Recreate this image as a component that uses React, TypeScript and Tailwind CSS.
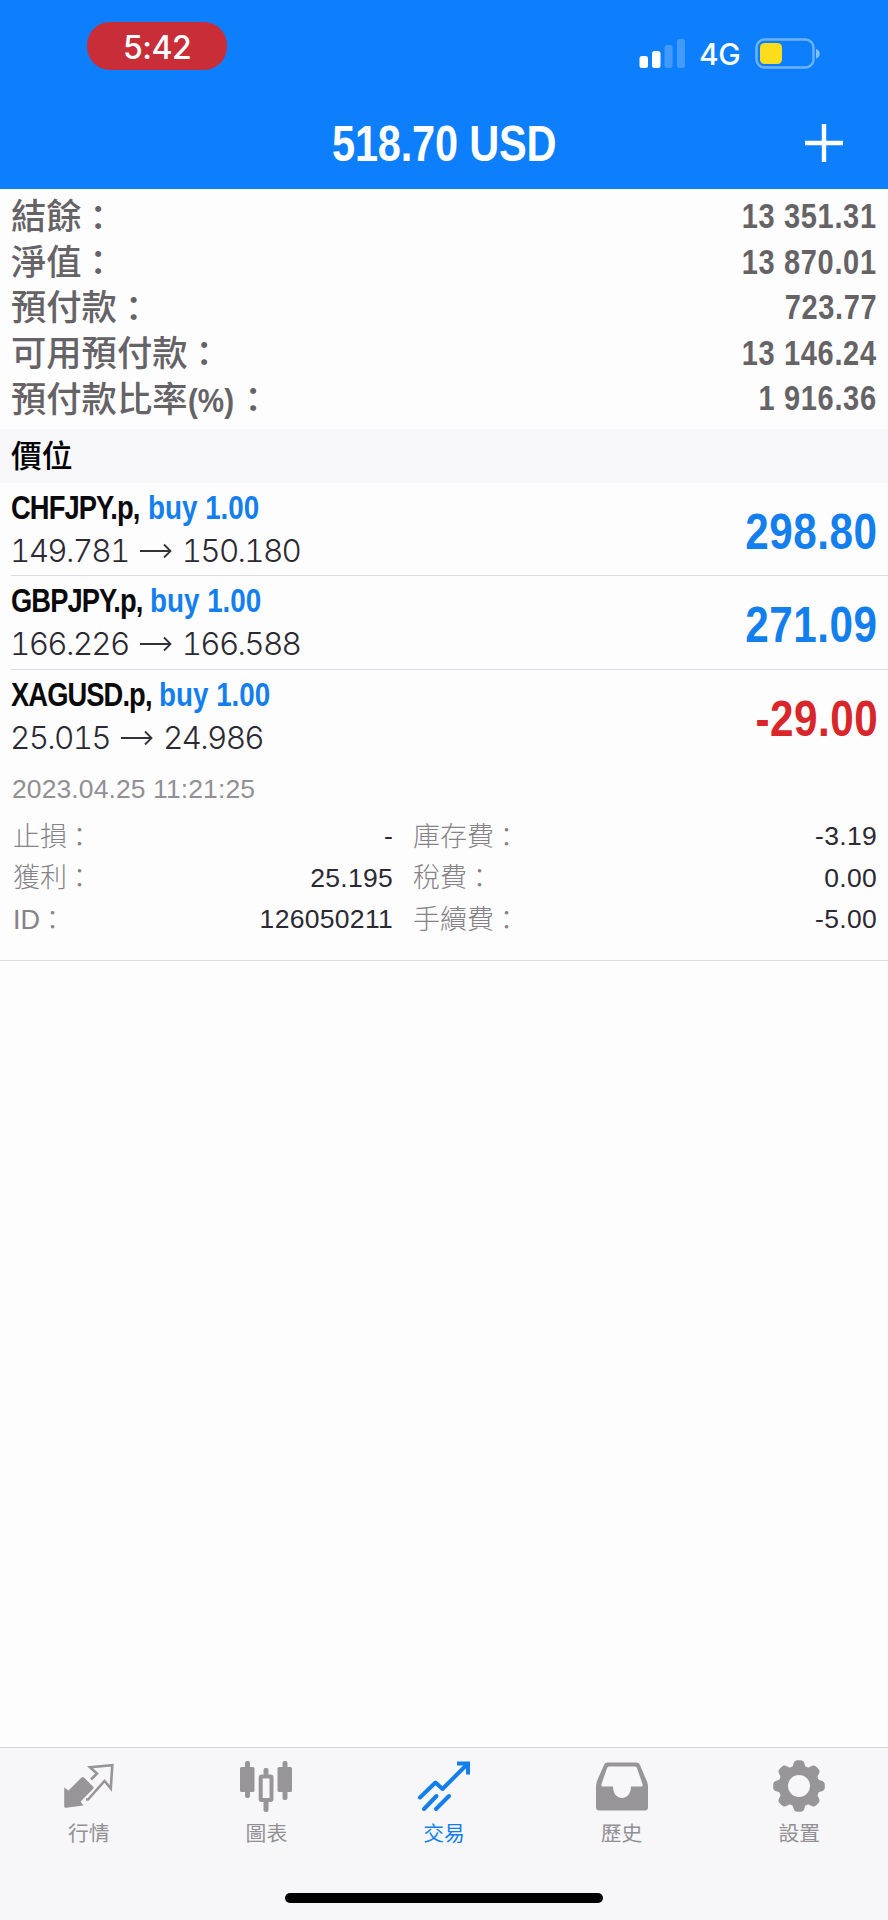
import React from "react";

const CJK = "font-['Liberation_Sans','Noto_Sans_CJK_TC',sans-serif]";
const CONDENSED = "inline-block whitespace-nowrap font-['Liberation_Sans',sans-serif] font-bold";
const LIGHT = "font-['Inter','Liberation_Sans',sans-serif] font-light";

const summary = [
  ["結餘", "", "13 351.31"],
  ["淨值", "", "13 870.01"],
  ["預付款", "", "723.77"],
  ["可用預付款", "", "13 146.24"],
  ["預付款比率", "(%)", "1 916.36"],
];

const positions = [
  { symbol: "CHFJPY.p,", width: "w-[137px]", open: "149.781", now: "150.180", profit: "298.80", loss: false },
  { symbol: "GBPJPY.p,", width: "w-[139px]", open: "166.226", now: "166.588", profit: "271.09", loss: false },
  { symbol: "XAGUSD.p,", width: "w-[148px]", open: "25.015", now: "24.986", profit: "-29.00", loss: true },
];

const details = [
  ["止損", "-", "庫存費", "-3.19"],
  ["獲利", "25.195", "稅費", "0.00"],
  ["ID", "126050211", "手續費", "-5.00"],
];

function StatusBar() {
  return (
    <div className="flex h-[98px] items-start pl-[87px] pr-[66px] text-white">
      <div className="mt-[22px] flex h-[48px] w-[140px] items-center justify-center rounded-[23px] bg-[#c92e38] pt-[3px] font-['Inter',sans-serif] text-[32px] font-medium leading-none tracking-[-0.5px]">
        5:42
      </div>
      <div className="mt-[37px] ml-auto flex items-center">
        <svg width="47" height="31" viewBox="0 0 47 31" fill="#fff">
          <rect x="0.5" y="18" width="8.5" height="12" rx="2.5" />
          <rect x="13" y="13" width="8.5" height="17" rx="2.5" />
          <rect x="25.500" y="7" width="8" height="23" rx="2.5" opacity="0.22" />
          <rect x="38" y="1" width="8" height="29" rx="2.5" opacity="0.22" />
        </svg>
        <span className="ml-[13px] w-[43px] pt-[2px] font-['Inter',sans-serif] text-[30px] font-medium leading-[31px] tracking-[-0.5px]">
          4G
        </span>
        <svg className="ml-[13px]" width="67" height="31" viewBox="0 0 67 31">
          <rect x="1.500" y="1.500" width="57" height="28" rx="8" fill="none" stroke="#fff" strokeOpacity="0.4" strokeWidth="2.4" />
          <rect x="5" y="5" width="22" height="21" rx="4.500" fill="#fcdd1b" />
          <path d="M61 11c5 1.500 5 8 0 9.500z" fill="#fff" fillOpacity="0.5" />
        </svg>
      </div>
    </div>
  );
}

function Arrow() {
  return (
    <svg className="mr-[10px] ml-[11px]" width="32" height="16" viewBox="0 0 32 16" fill="none" stroke="#33313a" strokeWidth="1.8">
      <path d="M0 8h30M24 1.500l6.500 6.500-6.500 6.500" />
    </svg>
  );
}

function QuotesIcon() {
  return (
    <svg width="52" height="52" viewBox="0 0 52 52">
      <path d="M1.200 27.500l4.300 3L18.500 17.500q1.200-1.200 2.500 0l9 9q1.200 1.200 0 2.400L17.500 41.500l3 4L3 47.800q-1.800 0-1.800-1.600z" fill="#97959a" />
      <path d="M28 19.500l6-6-7-6.200L49.300 5.200 47.800 28.500 41.500 21 25 39.500h-2" fill="none" stroke="#97959a" strokeWidth="2.6" />
    </svg>
  );
}

function ChartIcon() {
  return (
    <svg width="52" height="52" viewBox="0 0 52 52" fill="#97959a">
      <rect x="5" y="1" width="5" height="37" rx="2" />
      <rect x="0" y="7" width="14.500" height="25" rx="1.500" />
      <rect x="42.500" y="1" width="5" height="39" rx="2" />
      <rect x="37.500" y="7" width="14.500" height="25" rx="1.500" />
      <rect x="23.500" y="8" width="5" height="8" rx="2" />
      <rect x="23.500" y="39" width="5" height="13" rx="2" />
      <rect x="20.700" y="16.500" width="10.800" height="23.500" rx="1" fill="none" stroke="#97959a" strokeWidth="4" />
    </svg>
  );
}

function TradeIcon() {
  return (
    <svg width="52" height="52" viewBox="0 0 52 52" fill="none" stroke="#137fee" strokeWidth="4" strokeLinecap="round" strokeLinejoin="round">
      <path d="M2 37.500L17.500 22.500l7 6.500L49 4.500" />
      <path d="M39 3.500h11v11" strokeLinecap="butt" strokeLinejoin="miter" />
      <path d="M6 49l12.500-13M18 49l13-13" />
    </svg>
  );
}

function HistoryIcon() {
  return (
    <svg width="52" height="52" viewBox="0 0 52 52">
      <path
        fillRule="evenodd"
        fill="#97959a"
        d="M12 2.500h28c2 0 3.200.8 4 2.500l5 12c1.700 3.500 3 6 3 10v20.500c0 2-1.200 3-3 3H3c-1.800 0-3-1-3-3V27c0-4 1.200-6.500 2.700-10L8 5c.8-1.700 2-2.500 4-2.500zM13.500 6.500c-1.200 0-2 .5-2.500 1.700L5.500 24c-.4 1.400 0 2.500 1.500 2.500h10C17 33 20.500 38 26 38s9-5 9-11.500h10c1.500 0 1.900-1.100 1.500-2.500L41 8.200c-.5-1.200-1.300-1.700-2.500-1.700z"
      />
    </svg>
  );
}

function SettingsIcon() {
  return (
    <svg width="52" height="52" viewBox="0 0 52 52">
      <g fill="#97959a">
        {[0, 45, 90, 135, 180, 225, 270, 315].map((a) => (
          <path key={a} transform={`rotate(${a} 26 26)`} d="M16.500 9c2.700-.5 3.300-2.500 3.900-5C21.100 1.300 22.300.2 24.500.2h3c2.200 0 3.400 1.100 4.100 3.800.6 2.500 1.200 4.500 3.900 5z" />
        ))}
      </g>
      <circle cx="26" cy="26" r="15.800" fill="none" stroke="#97959a" strokeWidth="9.600" />
    </svg>
  );
}

const tabs = [
  { label: "行情", icon: <QuotesIcon />, active: false },
  { label: "圖表", icon: <ChartIcon />, active: false },
  { label: "交易", icon: <TradeIcon />, active: true },
  { label: "歷史", icon: <HistoryIcon />, active: false },
  { label: "設置", icon: <SettingsIcon />, active: false },
];

function DetailCell({ label, value }: { label: string; value: string }) {
  return (
    <>
      <span className="flex pt-[2px] font-light text-[#858388]">
        {label}
        <span className="-ml-[1px] pt-[1px]">：</span>
      </span>
      <span className="text-[26.500px] tracking-[0.3px] text-[#2b2933]">{value}</span>
    </>
  );
}

export default function App() {
  return (
    <div className={`flex h-[1920px] w-[888px] flex-col overflow-hidden bg-[#fefdfe] ${CJK}`}>
      <header className="h-[189px] shrink-0 bg-[#0d7ffc]">
        <StatusBar />
        <div className="grid h-[91px] grid-cols-[1fr_auto_1fr] items-center text-white">
          <span />
          <h1 className={`${CONDENSED} scale-x-[0.83] text-[50px] leading-none tracking-[-0.2px]`}>518.70 USD</h1>
          <svg className="mr-[45px] mb-[2px] justify-self-end" width="38" height="38" viewBox="0 0 38 38" stroke="#fff" strokeWidth="4.400">
            <path d="M0 19h38M19 0v38" />
          </svg>
        </div>
      </header>

      <section className="h-[240px] shrink-0 pt-[4px] text-[#656366]">
        {summary.map(([label, suffix, value]) => (
          <div key={label} className="flex h-[45.6px] items-center justify-between pr-[11px] pl-[11px]">
            <span className="flex items-center pt-[2px] text-[35.300px] font-medium leading-none">
              {label}
              {suffix && (
                <span className="w-[49px]">
                  <span className={`${CONDENSED} origin-left scale-x-[0.87] text-[34px]`}>{suffix}</span>
                </span>
              )}
              <span className="-ml-[1px] pt-[3px]">：</span>
            </span>
            <span className={`${CONDENSED} origin-right scale-x-[0.84] pt-[1px] text-[34.500px] leading-none tracking-[0.8px]`}>{value}</span>
          </div>
        ))}
      </section>

      <div className="flex h-[54px] shrink-0 items-center bg-[#f8f7fa] pt-[2px] pl-[11px] text-[30.800px] font-medium leading-none text-black">
        價位
      </div>

      <main className="shrink-0">
        {positions.map((p, i) => (
          <div key={p.symbol} className="flex flex-col pl-[11px]">
            <div className={`flex h-[93.3px] items-center justify-between pr-[10px] ${i < 2 ? "border-b-[1.5px] border-[#dddce2]" : ""}`}>
              <div>
                <div className="flex h-[43px] items-center text-[33.500px] leading-none">
                  <span className={p.width}>
                    <span className={`${CONDENSED} origin-left scale-x-[0.815] tracking-[-1.1px] text-[#0a0a0c]`}>{p.symbol}</span>
                  </span>
                  <span className={`${CONDENSED} origin-left scale-x-[0.83] text-[#137fee]`}>buy 1.00</span>
                </div>
                <div className={`-ml-[1px] flex h-[43px] items-center text-[31.500px] leading-none tracking-[-0.055em] text-[#2b2933] tabular-nums ${LIGHT}`}>
                  <span>{p.open}</span>
                  <Arrow />
                  <span>{p.now}</span>
                </div>
              </div>
              <span className={`${CONDENSED} origin-right scale-x-[0.845] pt-[5px] text-[50px] leading-none tracking-[0.6px] ${p.loss ? "text-[#d8262a]" : "text-[#137fee]"}`}>{p.profit}</span>
            </div>
          </div>
        ))}
        <div className="h-[198px] border-b-[1.5px] border-[#dddce2] pr-[11px] pl-[13px]">
          <div className="-ml-[1px] flex h-[53px] items-center text-[26.500px] leading-none tracking-[0.1px] text-[#929094]">2023.04.25 11:21:25</div>
          {details.map(([a, b, c, d]) => (
            <div key={a} className="flex h-[41.5px] items-center text-[27px] leading-none">
              <div className="mr-[20px] flex w-[380px] items-center justify-between">
                <DetailCell label={a} value={b} />
              </div>
              <div className="flex flex-1 items-center justify-between">
                <DetailCell label={c} value={d} />
              </div>
            </div>
          ))}
        </div>
      </main>

      <nav className="mt-auto flex h-[173px] shrink-0 flex-col items-center border-t-[1.5px] border-[#d3d2d6] bg-[#f7f6f9]">
        <div className="flex w-full">
          {tabs.map((t) => (
            <div key={t.label} className={`flex flex-1 flex-col items-center pt-[12px] text-[20.800px] leading-none ${t.active ? "text-[#137fee]" : "text-[#929094]"}`}>
              {t.icon}
              <span className="mt-[12px]">{t.label}</span>
            </div>
          ))}
        </div>
        <div className="mt-auto mb-[17px] h-[10px] w-[318px] rounded-full bg-black" />
      </nav>
    </div>
  );
}
